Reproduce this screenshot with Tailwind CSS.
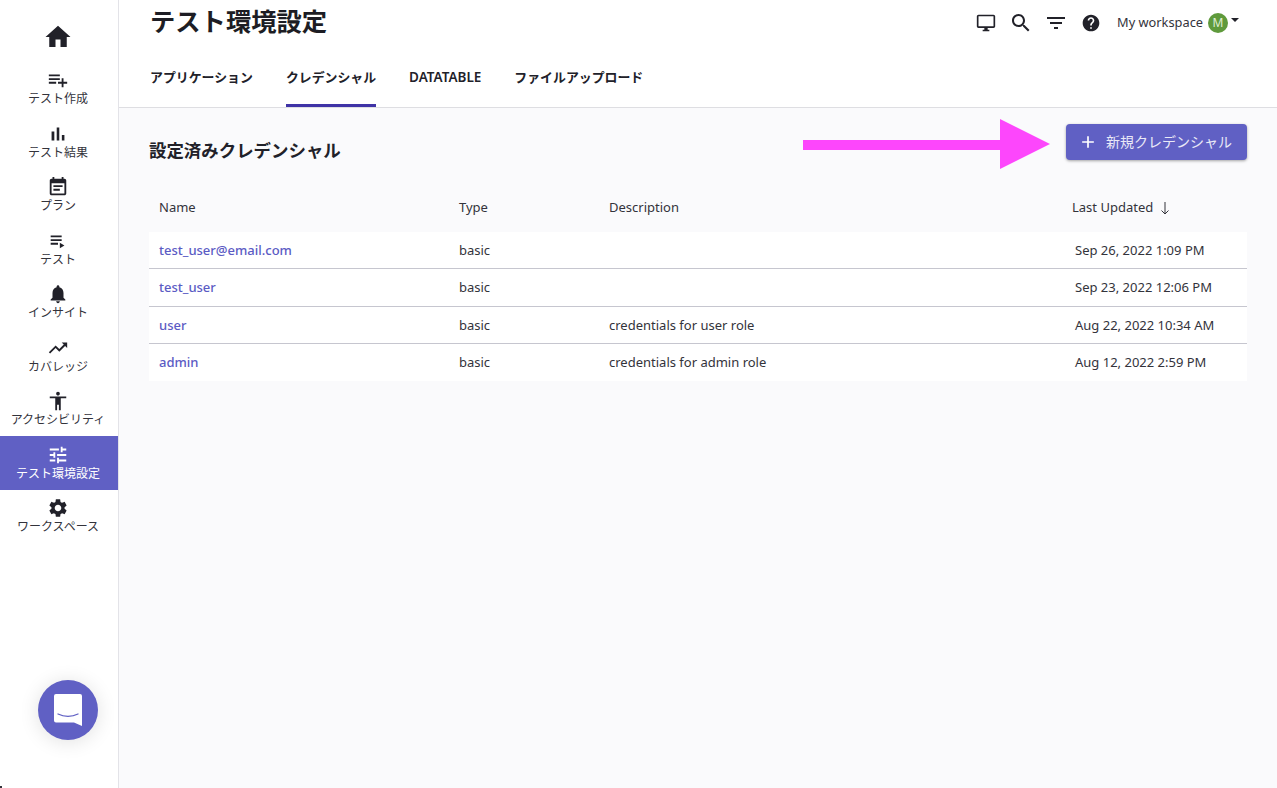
<!DOCTYPE html>
<html lang="ja">

<head>
    <meta charset="UTF-8">
    <title>テスト環境設定</title>
    <script src="https://cdn.jsdelivr.net/npm/@tailwindcss/browser@4"></script>
</head>

<body class="font-['Noto_Sans','Noto_Sans_CJK_JP',sans-serif] text-[#212129] bg-white overflow-hidden">
    <div class="relative flex h-[788px] w-[1277px] overflow-hidden">
        <!-- sidebar -->
        <nav class="w-[119px] shrink-0 border-r border-[#e3e3e8] bg-white text-[12px] leading-[16px] text-[#33333b]">
            <div class="flex h-[61.5px] items-center justify-center pr-[2px] pt-[13px]">
                <svg class="h-[30px] w-[30px] fill-[#212129]" viewBox="0 0 24 24"><path d="M10 20v-6h4v6h5v-8h3L12 3 2 12h3v8z"/></svg>
            </div>
            <a class="flex h-[53.5px] flex-col items-center pr-[2px] pt-[7.5px]">
                <svg class="h-[22px] w-[22px] fill-[#212129]" viewBox="0 0 24 24"><path d="M14 10H2v2h12v-2zm0-4H2v2h12V6zm4 8v-4h-2v4h-4v2h4v4h2v-4h4v-2h-4zM2 16h8v-2H2v2z"/></svg>
                <span>テスト作成</span>
            </a>
            <a class="flex h-[53.5px] flex-col items-center pr-[2px] pt-[7.5px]">
                <svg class="h-[22px] w-[22px] fill-[#212129]" viewBox="0 0 24 24"><path d="M5 9.2h3V19H5zM10.6 5h2.8v14h-2.8zm5.6 8H19v6h-2.8z"/></svg>
                <span>テスト結果</span>
            </a>
            <a class="flex h-[53.5px] flex-col items-center pr-[2px] pt-[7.5px]">
                <svg class="h-[22px] w-[22px] fill-[#212129]" viewBox="0 0 24 24"><path d="M17 10H7v2h10v-2zm2-7h-1V1h-2v2H8V1H6v2H5c-1.11 0-1.99.9-1.99 2L3 19c0 1.1.89 2 2 2h14c1.1 0 2-.9 2-2V5c0-1.1-.9-2-2-2zm0 16H5V8h14v11zm-5-5H7v2h7v-2z"/></svg>
                <span>プラン</span>
            </a>
            <a class="flex h-[53.5px] flex-col items-center pr-[2px] pt-[7.5px]">
                <svg class="h-[22px] w-[22px] fill-[#212129]" viewBox="0 0 24 24"><path d="M4 10h12v2H4zm0-4h12v2H4zm0 8h8v2H4zm10 0v6l5-3z"/></svg>
                <span>テスト</span>
            </a>
            <a class="flex h-[53.5px] flex-col items-center pr-[2px] pt-[7.5px]">
                <svg class="h-[22px] w-[22px] fill-[#212129]" viewBox="0 0 24 24"><path d="M12 22c1.1 0 2-.9 2-2h-4c0 1.1.89 2 2 2zm6-6v-5c0-3.07-1.64-5.64-4.5-6.32V4c0-.83-.67-1.5-1.5-1.5s-1.5.67-1.5 1.5v.68C7.63 5.36 6 7.92 6 11v5l-2 2v1h16v-1l-2-2z"/></svg>
                <span>インサイト</span>
            </a>
            <a class="flex h-[53.5px] flex-col items-center pr-[2px] pt-[7.5px]">
                <svg class="h-[22px] w-[22px] fill-[#212129]" viewBox="0 0 24 24"><path d="M16 6l2.29 2.29-4.88 4.88-4-4L2 16.59 3.41 18l6-6 4 4 6.3-6.29L22 12V6z"/></svg>
                <span>カバレッジ</span>
            </a>
            <a class="flex h-[53.5px] flex-col items-center pr-[2px] pt-[7.5px]">
                <svg class="h-[22px] w-[22px] fill-[#212129]" viewBox="0 0 24 24"><path d="M12 2c1.1 0 2 .9 2 2s-.9 2-2 2-2-.9-2-2 .9-2 2-2zm9 7h-6v13h-2v-6h-2v6H9V9H3V7h18v2z"/></svg>
                <span>アクセシビリティ</span>
            </a>
            <a class="flex h-[53.5px] flex-col items-center bg-[#6060c4] pr-[2px] pt-[7.5px] text-white">
                <svg class="h-[22px] w-[22px] fill-white" viewBox="0 0 24 24"><path d="M3 17v2h6v-2H3zM3 5v2h10V5H3zm10 16v-2h8v-2h-8v-2h-2v6h2zM7 9v2H3v2h4v2h2V9H7zm14 4v-2H11v2h10zm-6-4h2V7h4V5h-4V3h-2v6z"/></svg>
                <span>テスト環境設定</span>
            </a>
            <a class="flex h-[53.5px] flex-col items-center pr-[2px] pt-[7.5px]">
                <svg class="h-[22px] w-[22px] fill-[#212129]" viewBox="0 0 24 24"><path d="M19.14 12.94c.04-.3.06-.61.06-.94 0-.32-.02-.64-.07-.94l2.03-1.58c.18-.14.23-.41.12-.61l-1.92-3.32c-.12-.22-.37-.29-.59-.22l-2.39.96c-.5-.38-1.03-.7-1.62-.94l-.36-2.54c-.04-.24-.24-.41-.48-.41h-3.84c-.24 0-.43.17-.47.41l-.36 2.54c-.59.24-1.13.57-1.62.94l-2.39-.96c-.22-.08-.47 0-.59.22L2.74 8.87c-.12.21-.08.47.12.61l2.03 1.58c-.05.3-.09.63-.09.94s.02.64.07.94l-2.03 1.58c-.18.14-.23.41-.12.61l1.92 3.32c.12.22.37.29.59.22l2.39-.96c.5.38 1.03.7 1.62.94l.36 2.54c.05.24.24.41.48.41h3.84c.24 0 .44-.17.47-.41l.36-2.54c.59-.24 1.13-.56 1.62-.94l2.39.96c.22.08.47 0 .59-.22l1.92-3.32c.12-.22.07-.47-.12-.61l-2.01-1.58zM12 15.6c-1.98 0-3.6-1.62-3.6-3.6s1.62-3.6 3.6-3.6 3.6 1.62 3.6 3.6-1.62 3.6-3.6 3.6z"/></svg>
                <span>ワークスペース</span>
            </a>
        </nav>

        <main class="flex min-w-0 flex-1 flex-col">
            <!-- header -->
            <header class="h-[108px] shrink-0 border-b border-[#dedee2] bg-white">
                <div class="flex h-[44px] items-center justify-between pl-[31px] pr-[38px]">
                    <h1 class="text-[25.3px] leading-[32px] font-semibold text-[#1d1d24] -mt-[2px]">テスト環境設定</h1>
                    <div class="flex items-center pt-[1px]">
                        <svg class="h-[20px] w-[20px] fill-[#212129]" viewBox="0 0 24 24"><path d="M21 2H3c-1.1 0-2 .9-2 2v12c0 1.1.9 2 2 2h7v2H8v2h8v-2h-2v-2h7c1.1 0 2-.9 2-2V4c0-1.1-.9-2-2-2zm0 14H3V4h18v12z"/></svg>
                        <svg class="ml-[13px] h-[24px] w-[24px] fill-[#212129]" viewBox="0 0 24 24"><path d="M15.5 14h-.79l-.28-.27C15.41 12.59 16 11.11 16 9.5 16 5.91 13.09 3 9.5 3S3 5.91 3 9.5 5.91 16 9.5 16c1.61 0 3.09-.59 4.23-1.57l.27.28v.79l5 4.99L20.49 19l-4.99-5zm-6 0C7.01 14 5 11.99 5 9.5S7.01 5 9.5 5 14 7.01 14 9.5 11.99 14 9.5 14z"/></svg>
                        <svg class="ml-[11px] h-[24px] w-[24px] fill-[#212129]" viewBox="0 0 24 24"><path d="M10 18h4v-2h-4v2zM3 6v2h18V6H3zm3 7h12v-2H6v2z"/></svg>
                        <svg class="ml-[13px] h-[20px] w-[20px] fill-[#212129]" viewBox="0 0 24 24"><path d="M12 2C6.48 2 2 6.48 2 12s4.48 10 10 10 10-4.48 10-10S17.52 2 12 2zm1 17h-2v-2h2v2zm2.07-7.75l-.9.92C13.45 12.9 13 13.500 13 15h-2v-.5c0-1.1.45-2.1 1.17-2.83l1.24-1.26c.37-.36.59-.86.59-1.41 0-1.1-.9-2-2-2s-2 .9-2 2H8c0-2.21 1.79-4 4-4s4 1.79 4 4c0 .88-.36 1.68-.93 2.25z"/></svg>
                        <span class="ml-[16px] text-[12.8px] text-[#33333b]">My workspace</span>
                        <span class="ml-[5px] flex h-[20px] w-[20px] items-center justify-center rounded-full bg-[#5f9a3c] text-[12px] text-[#dfeed5]">M</span>
                        <span class="ml-[3px] mb-[5px] h-0 w-0 border-x-[4px] border-t-[4px] border-x-transparent border-t-[#212129]"></span>
                    </div>
                </div>
                <div class="flex h-[63px] pl-[31px] text-[12.9px] font-semibold text-[#212129]">
                    <a class="mr-[33px] flex items-center border-b-[3px] border-transparent pt-[7px]">アプリケーション</a>
                    <a class="mr-[33px] flex items-center border-b-[3px] border-[#3f33a6] pt-[7px]">クレデンシャル</a>
                    <a class="mr-[33px] flex items-center border-b-[3px] border-transparent pt-[7px] text-[13.5px]">DATATABLE</a>
                    <a class="flex items-center border-b-[3px] border-transparent pt-[7px]">ファイルアップロード</a>
                </div>
            </header>

            <!-- content -->
            <section class="flex-1 bg-[#fafafc] pl-[30px] pr-[30px]">
                <div class="flex items-start justify-between pt-[16px]">
                    <h2 class="mt-[13px] mb-[1px] text-[17.45px] leading-[26px] font-semibold text-[#212129]">設定済みクレデンシャル</h2>
                    <button class="flex h-[36px] w-[181px] items-center rounded-[4px] bg-[#6060c4] pl-[12px] text-[14px] text-[#e9e9f7] shadow-[0_1px_3px_rgba(0,0,0,0.35)]">
                        <svg class="h-[20px] w-[20px] fill-white" viewBox="0 0 24 24"><path d="M19 13h-6v6h-2v-6H5v-2h6V5h2v6h6v2z"/></svg>
                        <span class="mb-[2px] ml-[8px]">新規クレデンシャル</span>
                    </button>
                </div>
                <div class="mt-[24px] grid h-[44px] grid-cols-[300px_150px_463px_1fr] items-center px-[10px] pb-[4px] text-[13px] text-[#33333b]">
                    <span>Name</span>
                    <span>Type</span>
                    <span>Description</span>
                    <span class="flex items-center">Last Updated
                        <svg class="ml-[7px] h-[14px] w-[10px] stroke-[#33333b]" viewBox="0 0 10 14" fill="none"><path d="M5 1v12M1.5 9.5 5 13l3.5-3.5"/></svg>
                    </span>
                </div>
                <div class="bg-white text-[13px] text-[#33333b]">
                    <div class="grid h-[37px] grid-cols-[300px_150px_463px_1fr] items-center border-b border-[#c6c6cf] px-[10px] pt-[1px]">
                        <a class="font-medium text-[#5b5bc4]">test_user@email.com</a>
                        <span>basic</span>
                        <span></span>
                        <span class="pl-[3px]">Sep 26, 2022 1:09 PM</span>
                    </div>
                    <div class="grid h-[38px] grid-cols-[300px_150px_463px_1fr] items-center border-b border-[#c6c6cf] px-[10px]">
                        <a class="font-medium text-[#5b5bc4]">test_user</a>
                        <span>basic</span>
                        <span></span>
                        <span class="pl-[3px]">Sep 23, 2022 12:06 PM</span>
                    </div>
                    <div class="grid h-[37px] grid-cols-[300px_150px_463px_1fr] items-center border-b border-[#c6c6cf] px-[10px] pt-[1px]">
                        <a class="font-medium text-[#5b5bc4]">user</a>
                        <span>basic</span>
                        <span>credentials for user role</span>
                        <span class="pl-[3px]">Aug 22, 2022 10:34 AM</span>
                    </div>
                    <div class="grid h-[37px] grid-cols-[300px_150px_463px_1fr] items-center px-[10px]">
                        <a class="font-medium text-[#5b5bc4]">admin</a>
                        <span>basic</span>
                        <span>credentials for admin role</span>
                        <span class="pl-[3px]">Aug 12, 2022 2:59 PM</span>
                    </div>
                </div>
            </section>
        </main>

        <!-- annotation arrow, drawn over the page -->
        <svg class="absolute left-[803px] top-[119px] h-[50px] w-[247px] fill-[#fd46fc]" viewBox="0 0 247 50"><path d="M0 21h197V0l50 25-50 25V31H0z"/></svg>

        <!-- chat launcher -->
        <div class="absolute left-[38px] top-[680px] flex h-[60px] w-[60px] items-center justify-center rounded-full bg-[#6060c4] shadow-[0_2px_20px_rgba(0,0,0,0.12)]">
            <svg class="h-[32px] w-[28px]" viewBox="0 0 28 32"><path class="fill-white" d="M2 0h24a2 2 0 0 1 2 2v30l-8-3.500H2a2 2 0 0 1-2-2V2a2 2 0 0 1 2-2z"/><path class="stroke-[#6060c4]" fill="none" stroke-width="1.300" stroke-linecap="round" d="M4 20c6 3 14 3 20 0"/></svg>
        </div>

        <!-- window corner speck -->
        <div class="absolute bottom-0 left-0 h-[2px] w-[2px] bg-[#33333b]"></div>
    </div>
</body>

</html>
